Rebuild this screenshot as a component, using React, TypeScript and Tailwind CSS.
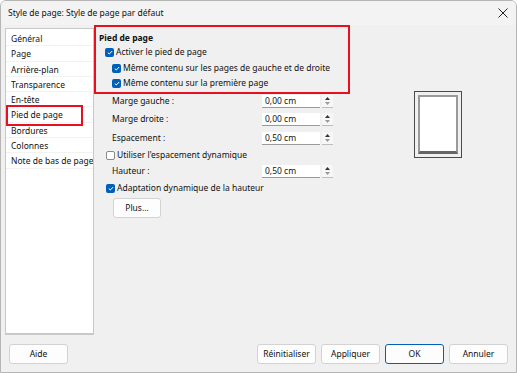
const pages = [
  'Général',
  'Page',
  'Arrière-plan',
  'Transparence',
  'En-tête',
  'Pied de page',
  'Bordures',
  'Colonnes',
  'Note de bas de page',
]

function Check({ on }: { on: boolean }) {
  return on ? (
    <span className="w-[9px] h-[9px] rounded-[2px] bg-[#005fb8] flex items-center justify-center flex-shrink-0">
      <svg width="6" height="5" viewBox="0 0 6 5">
        <path d="M0.8 2.6 L2.3 4 L5.2 1" fill="none" stroke="#fff" strokeWidth="1" />
      </svg>
    </span>
  ) : (
    <span className="w-[9px] h-[9px] rounded-[2px] bg-white border border-[#8a8a8a] flex-shrink-0" />
  )
}

function Spin({ label, value }: { label: string; value: string }) {
  return (
    <div className="flex items-center h-[18.5px] pl-[18px]">
      <span className="w-[150px]">{label}</span>
      <div className="w-[58px] h-[13px] bg-white border-b border-[#9a9a9a] pl-[3px] leading-[12px]">{value}</div>
      <div className="w-[11px] h-[13px] ml-[2px] flex flex-col items-center justify-center gap-[2px] bg-[#f7f7f7] border-b border-[#bdbdbd]">
        <svg width="5" height="3" viewBox="0 0 5 3"><path d="M0 3 L2.5 0 L5 3Z" fill="#333" /></svg>
        <svg width="5" height="3" viewBox="0 0 5 3"><path d="M0 0 L2.5 3 L5 0Z" fill="#999" /></svg>
      </div>
    </div>
  )
}

function Btn({ label, focus }: { label: string; focus?: boolean }) {
  return (
    <div
      className={
        'w-[59px] h-[20px] rounded-[3px] bg-[#fdfdfd] flex items-center justify-center border ' +
        (focus ? 'border-[#005fb8]' : 'border-[#d3d3d3]')
      }
    >
      {label}
    </div>
  )
}

export default function App() {
  return (
    <div
      className="w-[517px] h-[373px] bg-[#f0f0f0] text-[8.5px] text-[#111] flex flex-col border border-[#b5b5b5] rounded-t-[6px] overflow-hidden"
      style={{ fontFamily: '"Segoe UI", "Noto Sans", sans-serif' }}
    >
      <div className="h-[24px] flex items-center justify-between pl-[7px] pr-[8px] bg-[#f3f3f3]">
        <span>Style de page: Style de page par défaut</span>
        <svg width="10" height="10" viewBox="0 0 10 10">
          <path d="M0.5 0.5 L9.5 9.5 M9.5 0.5 L0.5 9.5" stroke="#222" strokeWidth="1" />
        </svg>
      </div>

      <div className="flex pl-[4px] pr-[4px]">
        <div className="relative w-[89px] h-[307px] mt-[3px] bg-white border border-[#c8c8c8] border-b-2 pt-[2px] overflow-hidden">
          {pages.map((p) => (
            <div key={p} className="h-[15.3px] pl-[5px] leading-[15px] whitespace-nowrap border-b border-[#f2f2f2]">
              {p}
            </div>
          ))}
          <div className="absolute left-0 top-[76px] w-[77px] h-[21px] border-2 border-[#e8101e]" />
        </div>

        <div className="flex-1 flex">
          <div className="w-[256px] flex flex-col">
            <div className="h-[69px] border-2 border-[#e8101e] pl-[3px] pt-[4px]">
              <div className="font-bold h-[14px] leading-[13px]">Pied de page</div>
              <div className="flex items-center gap-[2px] h-[15px] pl-[6px]">
                <Check on />
                <span>Activer le pied de page</span>
              </div>
              <div className="flex items-center gap-[2px] h-[16px] pl-[13px]">
                <Check on />
                <span>Même contenu sur les pages de gauche et de droite</span>
              </div>
              <div className="flex items-center gap-[2px] h-[15px] pl-[13px]">
                <Check on />
                <span>Même contenu sur la première page</span>
              </div>
            </div>
            <div className="-mt-[2px]">
              <Spin label="Marge gauche :" value="0,00 cm" />
              <Spin label="Marge droite :" value="0,00 cm" />
              <Spin label="Espacement :" value="0,50 cm" />
              <div className="flex items-center gap-[2px] h-[15px] pl-[12px]">
                <Check on={false} />
                <span>Utiliser l'espacement dynamique</span>
              </div>
              <Spin label="Hauteur :" value="0,50 cm" />
              <div className="flex items-center gap-[2px] h-[15px] pl-[12px]">
                <Check on />
                <span>Adaptation dynamique de la hauteur</span>
              </div>
              <div className="pl-[19px] pt-[2px]">
                <div className="w-[48px] h-[20px] rounded-[3px] bg-[#fdfdfd] border border-[#d3d3d3] flex items-center justify-center">
                  Plus...
                </div>
              </div>
            </div>
          </div>

          <div className="flex-1 pl-[64px] pt-[66px]">
            <div className="w-[48px] h-[67px] border border-[#4a4a4a] p-[3px]">
              <div className="w-full h-full bg-white border-2 border-[#9a9a9a] border-b-[3px] border-b-[#666]" />
            </div>
          </div>
        </div>
      </div>

      <div className="flex items-center justify-between pl-[8px] pr-[8px] mt-[9px]">
        <Btn label="Aide" />
        <div className="flex gap-[5px]">
          <Btn label="Réinitialiser" />
          <Btn label="Appliquer" />
          <Btn label="OK" focus />
          <Btn label="Annuler" />
        </div>
      </div>
    </div>
  )
}
